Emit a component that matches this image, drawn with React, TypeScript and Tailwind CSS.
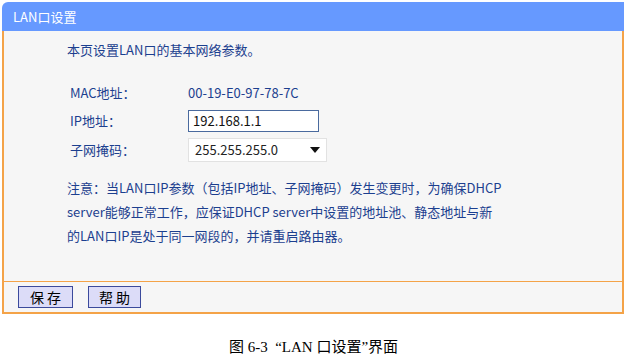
import React from 'react';

const font = { fontFamily: '"Noto Sans CJK SC", "Noto Sans", sans-serif' };

const App: React.FC = () => {
  return (
    <div className="w-[627px] h-[356px] bg-white pt-[2px] pl-[2px] overflow-hidden" style={font}>
      <div className="w-[622px]">
        {/* 标题栏 */}
        <div className="h-[29px] bg-[#6699ff] rounded-tl-[6px] pl-[11px] flex items-center text-white text-[13px]">
          LAN口设置
        </div>

        <div className="border-x-2 border-b-2 border-[#f4a348] bg-[#f6f6f6]">
          <div className="h-[251px] pt-[7px] pl-[63px] text-[#1c3f8f] text-[13px] border-b border-[#f4a348]">
            <div className="h-[24px] leading-[24px]">本页设置LAN口的基本网络参数。</div>

            <div className="mt-[17px] pl-[3px]">
              <div className="h-[28px] flex items-center">
                <span className="w-[118px]">MAC地址：</span>
                <span>00-19-E0-97-78-7C</span>
              </div>
              <div className="h-[28px] flex items-center">
                <span className="w-[118px]">IP地址：</span>
                <div className="w-[131px] h-[22px] bg-white border border-[#4a6a9e] flex items-center pl-[4px] text-[#111] text-[13px]">
                  192.168.1.1
                </div>
              </div>
              <div className="h-[29px] flex items-center">
                <span className="w-[118px]">子网掩码：</span>
                <div className="w-[139px] h-[24px] bg-white border border-[#e2e2e2] flex items-center justify-between pl-[6px] pr-[6px] text-[#222] text-[13px]">
                  <span>255.255.255.0</span>
                  <svg width="10" height="6" viewBox="0 0 10 6">
                    <path d="M0 0 L10 0 L5 6 Z" fill="#111" />
                  </svg>
                </div>
              </div>
            </div>

            <div className="mt-[12px] leading-[24px] w-[460px]">
              <div>注意：当LAN口IP参数（包括IP地址、子网掩码）发生变更时，为确保DHCP</div>
              <div>server能够正常工作，应保证DHCP server中设置的地址池、静态地址与新</div>
              <div>的LAN口IP是处于同一网段的，并请重启路由器。</div>
            </div>
          </div>

          {/* 按钮 */}
          <div className="h-[30px] flex items-center pl-[14px] gap-[15px]">
            <button className="w-[55px] h-[22px] bg-[#dcdcf8] border border-[#3b4a9c] text-[14px] text-black leading-none">
              保 存
            </button>
            <button className="w-[53px] h-[22px] bg-[#dcdcf8] border border-[#3b4a9c] text-[14px] text-black leading-none">
              帮 助
            </button>
          </div>
        </div>
      </div>

      <div
        className="mt-[25px] h-[17px] leading-[17px] text-center text-[15px] text-black pr-[2px]"
        style={{ fontFamily: '"Liberation Serif", "Noto Sans CJK SC", serif' }}
      >
        图 6-3 &nbsp;“LAN 口设置”界面
      </div>
    </div>
  );
};

export default App;
